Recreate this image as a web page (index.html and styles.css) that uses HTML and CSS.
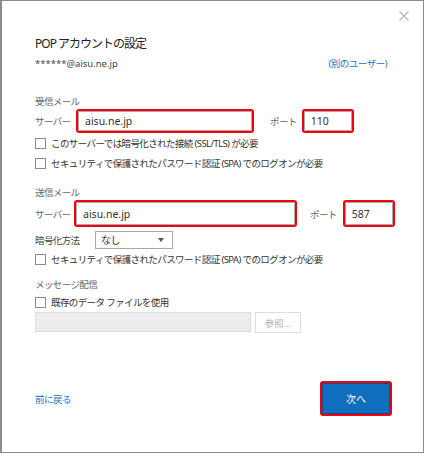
FILE: index.html
```html
<!DOCTYPE html>
<html lang="ja">
<head>
  <meta charset="UTF-8" />
  <meta name="viewport" content="width=device-width, initial-scale=1.0"/>
  <title>POP アカウントの設定</title>
  <link rel="stylesheet" href="styles.css">
</head>
<body>
  <div id="dialog">
    <button id="closeBtn" aria-label="閉じる">
      <svg width="10" height="10" viewBox="0 0 10 10">
        <path d="M0.5 0.5 L9.5 9.5 M9.5 0.5 L0.5 9.5" stroke="#b4b4b4" stroke-width="1.1" fill="none"/>
      </svg>
    </button>

    <h1>POP アカウントの設定</h1>
    <div class="account-row">
      <span class="account">******@aisu.ne.jp</span>
      <a href="#" class="link">(別のユーザー)</a>
    </div>

    <div class="section-title incoming">受信メール</div>
    <div class="server-row">
      <span class="label">サーバー</span>
      <span class="mark server-in"><input type="text" value="aisu.ne.jp"></span>
      <span class="port-label">ポート</span>
      <span class="mark port"><input type="text" value="110"></span>
    </div>
    <label class="check"><span class="box"></span>このサーバーでは暗号化された接続 (SSL/TLS) が必要</label>
    <label class="check"><span class="box"></span>セキュリティで保護されたパスワード認証 (SPA) でのログオンが必要</label>

    <div class="section-title outgoing">送信メール</div>
    <div class="server-row out">
      <span class="label">サーバー</span>
      <span class="mark server-out"><input type="text" value="aisu.ne.jp"></span>
      <span class="port-label">ポート</span>
      <span class="mark port"><input type="text" value="587"></span>
    </div>
    <div class="crypt-row">
      <span class="label">暗号化方法</span>
      <div class="select">なし<span class="arrow"></span></div>
    </div>
    <label class="check"><span class="box"></span>セキュリティで保護されたパスワード認証 (SPA) でのログオンが必要</label>

    <div class="section-title delivery">メッセージ配信</div>
    <label class="check"><span class="box"></span>既存のデータ ファイルを使用</label>
    <div class="file-row">
      <div class="file-path"></div>
      <button class="browse" disabled>参照...</button>
    </div>

    <div class="footer">
      <a href="#" class="link">前に戻る</a>
      <span class="mark next"><button class="primary">次へ</button></span>
    </div>
  </div>
</body>
</html>
```

FILE: styles.css
```css
:root {
  --accent: #106ebe;
  --link: #1a70c5;
  --mark: #f2000d;
  --text: #333;
  --muted: #666;
}

* {
  box-sizing: border-box;
}

body {
  margin: 0;
  background: #fff;
  font-family: "Noto Sans", "Noto Sans CJK JP", sans-serif;
  color: var(--text);
}

#dialog {
  position: relative;
  width: 424px;
  height: 453px;
  border: 1px solid #8c8c8c;
  border-left-width: 2px;
  padding: 0 31px 0 33px;
  display: flex;
  flex-direction: column;
  font-size: 9.5px;
  letter-spacing: -0.6px;
  white-space: nowrap;
}

#closeBtn {
  position: absolute;
  top: 8px;
  right: 14px;
  padding: 0;
  border: none;
  background: none;
}

h1 {
  margin: 34px 0 0;
  font-size: 12px;
  font-weight: normal;
  line-height: 18px;
  letter-spacing: -1px;
  color: #222;
}

.account-row {
  display: flex;
  justify-content: space-between;
  align-items: center;
  height: 16px;
  margin-top: 2px;
  padding-right: 5px;
  font-size: 9.5px;
  letter-spacing: 0;
}

.account {
  color: #444;
}

.link {
  color: var(--link);
  text-decoration: none;
  letter-spacing: -0.5px;
}

.section-title {
  line-height: 14px;
  color: var(--muted);
}

.section-title.incoming { margin-top: 24px; }
.section-title.outgoing { margin-top: 13px; }
.section-title.delivery { margin-top: 9px; }

.server-row {
  display: flex;
  align-items: center;
  height: 24px;
}

.server-row.out {
  height: 27px;
}

.label {
  color: var(--muted);
  width: 41px;
  flex: none;
}

.server-row.out .label {
  width: 39px;
}

.port-label {
  color: var(--muted);
  margin: 0 5px 0 16px;
  flex: none;
}

.server-row.out .port-label {
  margin-left: 13px;
  margin-right: 6px;
}

.mark {
  display: flex;
  height: 100%;
  border: 2px solid var(--mark);
  border-radius: 3px;
  flex: none;
}

.mark input {
  flex: 1;
  min-width: 0;
  border: 1px solid #a9a9a9;
  font: inherit;
  font-size: 10.5px;
  letter-spacing: 0;
  color: #333;
  padding: 0 0 0 6px;
  outline: none;
}

.server-in { width: 178px; }
.server-out { width: 223px; }
.port { width: 52px; }

.check {
  display: flex;
  align-items: center;
  height: 20px;
  color: #333;
}

.check .box {
  width: 11px;
  height: 11px;
  border: 1px solid #8a8a8a;
  margin-right: 5px;
  flex: none;
}

.crypt-row {
  display: flex;
  align-items: center;
  height: 18px;
  margin-top: 4px;
}

.crypt-row .label {
  width: 60px;
  color: #444;
}

.select {
  position: relative;
  width: 78px;
  height: 18px;
  border: 1px solid #a9a9a9;
  padding-left: 5px;
  line-height: 16px;
  font-size: 10px;
  color: #333;
}

.arrow {
  position: absolute;
  right: 8px;
  top: 6px;
  border-left: 3px solid transparent;
  border-right: 3px solid transparent;
  border-top: 4px solid #555;
}

.file-row {
  display: flex;
  gap: 4px;
}

.file-path {
  width: 216px;
  height: 20px;
  background: #ededed;
  border: 1px solid #dcdcdc;
}

.browse {
  width: 46px;
  height: 21px;
  background: #fff;
  border: 1px solid #dedede;
  color: #b0b0b0;
  font: inherit;
  padding: 0;
}

.footer {
  margin-top: auto;
  margin-bottom: 36px;
  display: flex;
  justify-content: space-between;
  align-items: center;
}

.next {
  width: 72px;
  height: 35px;
}

.primary {
  flex: 1;
  background: var(--accent);
  border: 1px solid #0a4f8c;
  color: #fff;
  font: inherit;
  font-size: 10px;
  padding: 0;
}
```
